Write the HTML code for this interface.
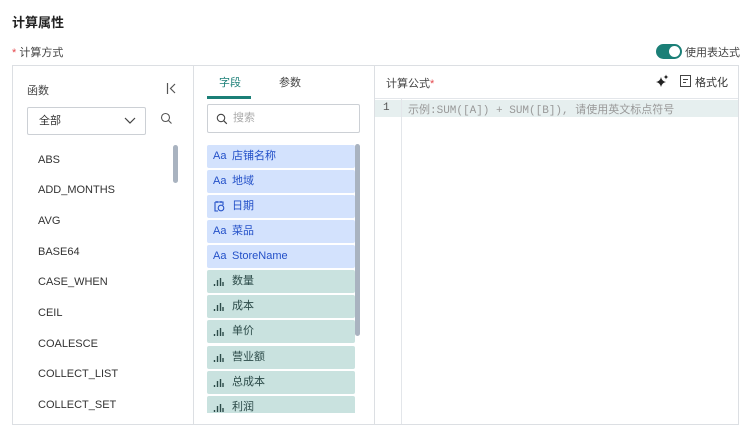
<!DOCTYPE html>
<html><head><meta charset="utf-8"><style>
*{box-sizing:border-box;margin:0;padding:0}
body{width:749px;height:431px;background:#fff;font-family:"Liberation Sans","Noto Sans CJK SC",sans-serif;color:#333;position:relative;overflow:hidden;font-size:12px}
.a{position:absolute}
.box{left:12px;top:65px;width:727px;height:360px;border:1px solid #dcdfe3}
.fn{position:absolute;left:38px;font-size:11px;color:#333}
.it{position:absolute;left:207px;width:148px;height:23px;border-radius:2px;font-size:11px;line-height:23px;padding-left:6px}
.d{background:#d3e2fd;color:#2350c8}
.m{background:#c9e2df;color:#2b4a48}
.ic{display:inline-block;width:19px;font-size:11px;vertical-align:top}
.ic svg{vertical-align:middle}
</style></head><body>
<div class="a" style="left:12px;top:12px;font-size:13px;font-weight:bold;color:#222">计算属性</div>
<div class="a" style="left:12px;top:44px;font-size:11px;color:#444"><span style="color:#e5484d">*</span> 计算方式</div>
<div class="a" style="left:656px;top:44px;width:26px;height:15px;border-radius:8px;background:#1b7f77"><div class="a" style="right:2px;top:2px;width:11px;height:11px;border-radius:50%;background:#fff"></div></div>
<div class="a" style="left:685px;top:44px;font-size:11px;color:#444">使用表达式</div>
<div class="a box"></div>
<div class="a" style="left:193px;top:66px;width:1px;height:358px;background:#dcdfe3"></div>
<div class="a" style="left:374px;top:66px;width:1px;height:358px;background:#dcdfe3"></div>
<!-- left -->
<div class="a" style="left:27px;top:82px;font-size:11px;color:#444">函数</div>
<svg class="a" style="left:166px;top:82px" width="11" height="13"><path d="M1.5 1v11" stroke="#555" stroke-width="1.2"/><path d="M9 2L4.5 6.5 9 11" fill="none" stroke="#555" stroke-width="1.2"/></svg>
<div class="a" style="left:27px;top:107px;width:119px;height:28px;border:1px solid #ccd0d5;border-radius:2px;font-size:11px;line-height:26px;padding-left:11px">全部
<svg class="a" style="left:96px;top:9px" width="12" height="8"><path d="M1 1l5 5 5-5" fill="none" stroke="#444" stroke-width="1.2"/></svg></div>
<svg class="a" style="left:160px;top:112px" width="13" height="13"><circle cx="5.5" cy="5.5" r="4" fill="none" stroke="#555" stroke-width="1.1"/><path d="M8.5 8.5l3 3" stroke="#555" stroke-width="1.1"/></svg>
<div class="a" style="left:173px;top:145px;width:5px;height:38px;border-radius:3px;background:#a9b3c0"></div>
<div class="fn" style="top:154px">ABS</div>
<div class="fn" style="top:184px">ADD_MONTHS</div>
<div class="fn" style="top:215px">AVG</div>
<div class="fn" style="top:246px">BASE64</div>
<div class="fn" style="top:276px">CASE_WHEN</div>
<div class="fn" style="top:307px">CEIL</div>
<div class="fn" style="top:338px">COALESCE</div>
<div class="fn" style="top:368px">COLLECT_LIST</div>
<div class="fn" style="top:399px">COLLECT_SET</div>
<!-- middle -->
<div class="a" style="left:219px;top:74px;font-size:11px;color:#1b7f77">字段</div>
<div class="a" style="left:279px;top:74px;font-size:11px;color:#444">参数</div>
<div class="a" style="left:207px;top:96px;width:44px;height:3px;background:#1b7f77"></div>
<div class="a" style="left:207px;top:104px;width:153px;height:29px;border:1px solid #ccd0d5;border-radius:2px;font-size:11px;color:#aaa;line-height:27px;padding-left:25px">搜索
<svg class="a" style="left:8px;top:8px" width="12" height="12"><circle cx="5" cy="5" r="3.7" fill="none" stroke="#444" stroke-width="1.1"/><path d="M7.8 7.8l3 3" stroke="#444" stroke-width="1.2"/></svg></div>
<div style="position:absolute;left:0;top:0;width:749px;height:413px;overflow:hidden">
<div class="it d" style="top:145px"><span class="ic">Aa</span>店铺名称</div>
<div class="it d" style="top:170px"><span class="ic">Aa</span>地域</div>
<div class="it d" style="top:195px"><span class="ic"><svg width="12" height="12"><path d="M2 2h8v3M2 2v9h3" fill="none" stroke="#2350c8" stroke-width="1.1"/><circle cx="8" cy="8" r="2.8" fill="none" stroke="#2350c8" stroke-width="1.1"/><path d="M4 1v2M8 1v2" stroke="#2350c8"/></svg></span>日期</div>
<div class="it d" style="top:220px"><span class="ic">Aa</span>菜品</div>
<div class="it d" style="top:245px"><span class="ic">Aa</span>StoreName</div>
<div class="it m" style="top:270px"><span class="ic"><svg width="11" height="11"><path d="M1.5 10V8M4.5 10V4M7.5 10V2M10 10V6" stroke="#2b4a48" stroke-width="1.4"/></svg></span>数量</div>
<div class="it m" style="top:295px"><span class="ic"><svg width="11" height="11"><path d="M1.5 10V8M4.5 10V4M7.5 10V2M10 10V6" stroke="#2b4a48" stroke-width="1.4"/></svg></span>成本</div>
<div class="it m" style="top:320px"><span class="ic"><svg width="11" height="11"><path d="M1.5 10V8M4.5 10V4M7.5 10V2M10 10V6" stroke="#2b4a48" stroke-width="1.4"/></svg></span>单价</div>
<div class="it m" style="top:346px"><span class="ic"><svg width="11" height="11"><path d="M1.5 10V8M4.5 10V4M7.5 10V2M10 10V6" stroke="#2b4a48" stroke-width="1.4"/></svg></span>营业额</div>
<div class="it m" style="top:371px"><span class="ic"><svg width="11" height="11"><path d="M1.5 10V8M4.5 10V4M7.5 10V2M10 10V6" stroke="#2b4a48" stroke-width="1.4"/></svg></span>总成本</div>
<div class="it m" style="top:396px"><span class="ic"><svg width="11" height="11"><path d="M1.5 10V8M4.5 10V4M7.5 10V2M10 10V6" stroke="#2b4a48" stroke-width="1.4"/></svg></span>利润</div>
</div>
<div class="a" style="left:355px;top:144px;width:5px;height:192px;border-radius:3px;background:#a9b3c0"></div>
<!-- right -->
<div class="a" style="left:386px;top:75px;font-size:11px;color:#444">计算公式<span style="color:#e5484d">*</span></div>
<svg class="a" style="left:655px;top:74px" width="14" height="14"><path d="M6 3Q6.8 7.2 11 8 6.8 8.8 6 13 5.2 8.8 1 8 5.2 7.2 6 3Z" fill="#222"/><path d="M11 0.5Q11.4 2.6 13.5 3 11.4 3.4 11 5.5 10.6 3.4 8.5 3 10.6 2.6 11 0.5Z" fill="#222"/></svg>
<svg class="a" style="left:680px;top:75px" width="11" height="12"><rect x="0.5" y="0.5" width="10" height="11" fill="none" stroke="#444"/><path d="M3 4.5h5M3 7.5h3" stroke="#444"/></svg>
<div class="a" style="left:695px;top:74px;font-size:11px;color:#333">格式化</div>
<div class="a" style="left:375px;top:98px;width:363px;height:1px;background:#e3e6ea"></div>
<div class="a" style="left:375px;top:100px;width:363px;height:17px;background:#e6efef"></div>
<div class="a" style="left:401px;top:99px;width:1px;height:325px;background:#e3e6ea"></div>
<div class="a" style="left:383px;top:102px;font-family:'Liberation Mono','Noto Sans CJK SC',monospace;font-size:11px;color:#555">1</div>
<div class="a" style="left:408px;top:101px;font-family:'Liberation Mono','Noto Sans CJK SC',monospace;font-size:11px;color:#999">示例:SUM([A]) + SUM([B]), 请使用英文标点符号</div>
</body></html>
